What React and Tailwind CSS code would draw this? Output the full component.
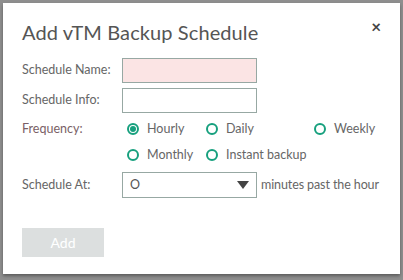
import React, { useState } from "react";

const Radio = ({ label, checked, onClick }) => (
  <button onClick={onClick} className="flex items-center h-[26px] text-[12.5px] text-[#666] whitespace-nowrap">
    <span className="w-[12px] h-[12px] rounded-full border-2 border-[#17a07e] flex items-center justify-center mr-[8px]">
      {checked && <span className="w-[6px] h-[6px] rounded-full bg-[#17a07e]" />}
    </span>
    <span>{label}</span>
  </button>
);

export default function App() {
  const [freq, setFreq] = useState("hourly");

  return (
    <div className="w-[403px] h-[280px] bg-[#8e8e8e] pt-[3px] px-[3px] pb-[6px] flex" style={{ fontFamily: "Lato, 'Open Sans', sans-serif" }}>
      <div className="flex-1 bg-white shadow-[0_2px_3px_rgba(0,0,0,0.35)] pl-[19px] pr-[18px] pt-[16px] flex flex-col">
        <div className="flex items-start justify-between">
          <h1 className="text-[20px] leading-[26px] text-[#555] font-normal tracking-[0.1px]">Add vTM Backup Schedule</h1>
          <span className="text-[17px] leading-[17px] font-bold text-[#444] -mt-[1px] mr-[1px]">×</span>
        </div>

        <div className="mt-[13px] grid grid-cols-[100px_1fr] gap-y-[5px] text-[12.5px] text-[#666] items-center">
          <label>Schedule Name:</label>
          <input className="w-[135px] h-[25px] border border-[#97a8a3] bg-[#fbe4e4] outline-none" />
          <label>Schedule Info:</label>
          <input className="w-[135px] h-[25px] border border-[#97a8a3] bg-white outline-none" />
          <label className="self-start mt-[2px] text-[#7a5f66]">Frequency:</label>
          <div className="grid grid-cols-[79px_108px_auto] -mt-[2px] pl-[5px]">
            <Radio label="Hourly" checked={freq === "hourly"} onClick={() => setFreq("hourly")} />
            <Radio label="Daily" checked={freq === "daily"} onClick={() => setFreq("daily")} />
            <Radio label="Weekly" checked={freq === "weekly"} onClick={() => setFreq("weekly")} />
            <Radio label="Monthly" checked={freq === "monthly"} onClick={() => setFreq("monthly")} />
            <Radio label="Instant backup" checked={freq === "instant"} onClick={() => setFreq("instant")} />
          </div>
          <label className="-mt-[1px]">Schedule At:</label>
          <div className="flex items-center -mt-[1px] whitespace-nowrap">
            <div className="w-[135px] h-[26px] shrink-0 border border-[#97a8a3] flex items-center justify-between pl-[7px] pr-[7px] text-[#555]">
              <span>O</span>
              <svg width="12" height="8" viewBox="0 0 12 8"><path d="M0 0h12L6 8z" fill="#444" /></svg>
            </div>
            <span className="ml-[4px] text-[12.5px] tracking-[-0.1px]">minutes past the hour</span>
          </div>
        </div>

        <button className="mt-[30px] w-[82px] h-[29px] bg-[#dcdfdf] text-white text-[14px]">Add</button>
      </div>
    </div>
  );
}
